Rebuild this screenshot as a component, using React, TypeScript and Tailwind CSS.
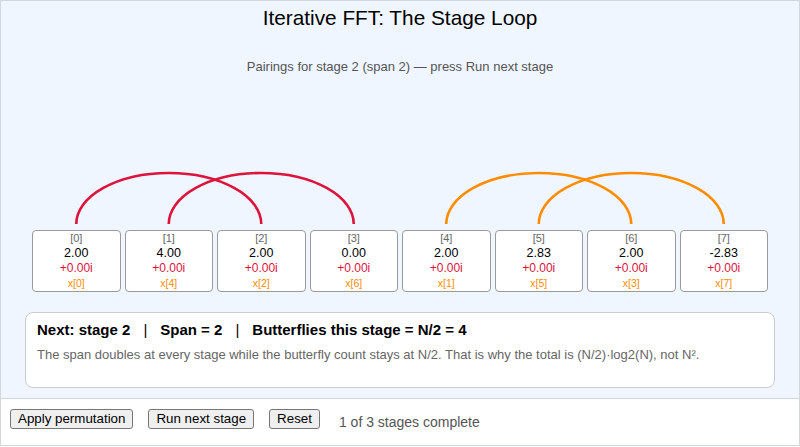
import React from "react";

const cells = [
  { re: "2.00", src: "x[0]" },
  { re: "4.00", src: "x[4]" },
  { re: "2.00", src: "x[2]" },
  { re: "0.00", src: "x[6]" },
  { re: "2.00", src: "x[1]" },
  { re: "2.83", src: "x[5]" },
  { re: "2.00", src: "x[3]" },
  { re: "-2.83", src: "x[7]" },
];

const pairs: [number, number, string][] = [
  [0, 2, "#dc143c"],
  [1, 3, "#dc143c"],
  [4, 6, "#ff8c00"],
  [5, 7, "#ff8c00"],
];

const cx = (i: number) => 44.25 + i * 92.5;

export default function App() {
  return (
    <div
      className="w-[800px] h-[446px] border border-[#d0d7de] bg-white flex flex-col"
      style={{ fontFamily: '"Liberation Sans", Arial, Helvetica, sans-serif' }}
    >
      <div className="h-[398px] bg-[#eff6ff] flex flex-col border-b border-[#d0d7de]">
        <div className="pt-[5px] text-center text-[20.8px] leading-[24px] text-black">
          Iterative FFT: The Stage Loop
        </div>
        <div className="mt-[29px] text-center text-[13px] leading-[16px] text-[#555]">
          Pairings for stage 2 (span 2) — press Run next stage
        </div>
        <svg
          className="mt-[90px] mx-auto block"
          width="736"
          height="65"
          viewBox="0 0 736 65"
        >
          {pairs.map(([a, b, c], k) => {
            const x1 = cx(a);
            const x2 = cx(b);
            const y = 59;
            const rx = (x2 - x1) / 2;
            return (
              <path
                key={k}
                d={`M ${x1} ${y} A ${rx} 51 0 0 1 ${x2} ${y}`}
                fill="none"
                stroke={c}
                strokeWidth={2.6}
              />
            );
          })}
        </svg>
        <div className="flex justify-center gap-[4px]">
          {cells.map((c, i) => (
            <div
              key={i}
              className="w-[88.5px] h-[62px] bg-white border border-[#9a9a9a] rounded-[4px] flex flex-col items-center"
            >
              <div className="text-[11px] leading-[15px] text-[#666]">[{i}]</div>
              <div className="text-[12.5px] leading-[15px] text-black">{c.re}</div>
              <div className="text-[12px] leading-[15px] text-[#dc143c]">+0.00i</div>
              <div className="text-[10.5px] leading-[15px] text-[#ff8c00]">{c.src}</div>
            </div>
          ))}
        </div>
        <div className="mt-[20px] mx-[24px] h-[76px] bg-white border border-[#cccccc] rounded-[8px] px-[11px] pt-[7px]">
          <div className="text-[15px] leading-[19px] font-bold text-black">
            Next: stage 2<span className="font-normal mx-[13px]">|</span>Span = 2
            <span className="font-normal mx-[13px]">|</span>Butterflies this stage = N/2 = 4
          </div>
          <div className="mt-[8px] text-[13px] leading-[15px] text-[#666]">
            The span doubles at every stage while the butterfly count stays at N/2. That is why the total is (N/2)·log2(N), not N².
          </div>
        </div>
      </div>
      <div className="flex-1 flex items-center pl-[9px] pb-[6px] gap-[15px]">
        <button className="h-[20px] px-[7px] text-[13.33px] leading-[16px] bg-[#efefef] border border-[#767676] rounded-[3px] text-black">
          Apply permutation
        </button>
        <button className="h-[20px] px-[7px] text-[13.33px] leading-[16px] bg-[#efefef] border border-[#767676] rounded-[3px] text-black">
          Run next stage
        </button>
        <button className="h-[20px] px-[7px] text-[13.33px] leading-[16px] bg-[#efefef] border border-[#767676] rounded-[3px] text-black">
          Reset
        </button>
        <span className="ml-[4px] mt-[5px] text-[14px] leading-[16px] text-[#555]">
          1 of 3 stages complete
        </span>
      </div>
    </div>
  );
}
